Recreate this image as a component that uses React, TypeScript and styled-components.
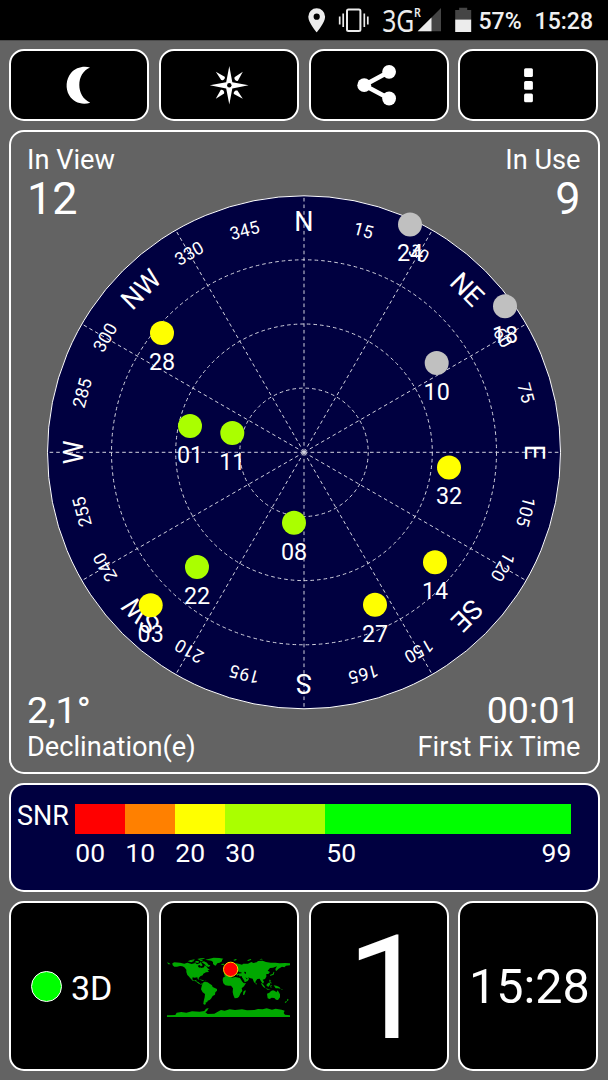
import React from "react";
import styled, { createGlobalStyle } from "styled-components";

const GlobalStyle = createGlobalStyle`
  * { box-sizing: border-box; }
  body { margin: 0; background: #636363; font-family: Roboto, "Liberation Sans", sans-serif; color: #fff; }
`;

const Screen = styled.div`
  width: 608px;
  height: 1080px;
  overflow: hidden;
  display: flex;
  flex-direction: column;
  background: #636363;
`;

const StatusBar = styled.header`
  height: 41px;
  flex: none;
  display: flex;
  align-items: flex-start;
  padding-left: 302px;
  background: #000;
  border-bottom: 1px solid #4c4c4c;
`;

const StatusIcons = styled.svg`
  display: block;
  width: 174px;
  height: 40px;
`;

const StatusText = styled.span<{ $left: number }>`
  margin-left: ${(p) => p.$left}px;
  font-size: 23px;
  font-weight: 500;
  line-height: 43px;
  color: #f0f0f0;
`;

const Main = styled.main`
  display: flex;
  flex-direction: column;
  gap: 9px;
  padding: 8px 8.5px 8px 9px;
`;

const Row = styled.div<{ $height: number }>`
  display: grid;
  grid-template-columns: repeat(4, 140px);
  grid-template-rows: 100%;
  gap: 9.8px;
  height: ${(p) => p.$height}px;
`;

const Tile = styled.div`
  display: flex;
  align-items: center;
  justify-content: center;
  min-width: 0;
  min-height: 0;
  background: #000;
  border: 2px solid #fff;
  border-radius: 15px;
`;

const TileIcon = styled.svg`
  display: block;
  width: 60px;
  height: 60px;
`;

const SkyPanel = styled.section`
  display: grid;
  grid-template: 1fr 1fr / 1fr 1fr;
  height: 644px;
  border: 2px solid #fff;
  border-radius: 15px;
`;

const Dial = styled.svg`
  grid-area: 1 / 1 / 3 / 3;
  width: 586px;
  height: 640px;
`;

const Readout = styled.div<{ $row: number; $col: number }>`
  grid-area: ${(p) => p.$row} / ${(p) => p.$col};
  align-self: ${(p) => (p.$row === 1 ? "start" : "end")};
  padding: 13px 17px 10px 16px;
  text-align: ${(p) => (p.$col === 1 ? "left" : "right")};
`;

const Label = styled.div`
  font-size: 27.2px;
  line-height: 30px;
`;

const Value = styled.div<{ $size: number; $line: number }>`
  font-size: ${(p) => p.$size}px;
  line-height: ${(p) => p.$line}px;
`;

const SnrPanel = styled.section`
  display: flex;
  height: 109px;
  padding: 19px 25px 0 6px;
  background: #000040;
  border: 2px solid #fff;
  border-radius: 15px;
`;

const SnrTitle = styled.div`
  width: 58.3px;
  font-size: 27px;
  line-height: 24px;
`;

const Scale = styled.div`
  display: grid;
  grid-template-columns: 50px 50px 50px 100px 246px;
  grid-template-rows: 30px 38px;
`;

const Band = styled.div<{ $color: string }>`
  background: ${(p) => p.$color};
`;

const Tick = styled.div`
  display: flex;
  justify-content: space-between;
  font-size: 26.5px;
  line-height: 38px;
`;

const LastTick = styled(Tick)`
  padding-left: 1px;
`;

const FixTile = styled(Tile)`
  justify-content: flex-start;
  padding-left: 20px;
  gap: 9px;
  font-size: 34px;
`;

const FixLamp = styled.span`
  width: 31px;
  height: 31px;
  border: 1.5px solid #fff;
  border-radius: 50%;
  background: #00ff00;
`;

const FixText = styled.span`
  line-height: 38px;
  padding-top: 3px;
`;

const MapSvg = styled.svg`
  display: block;
  flex: none;
  width: 136px;
  height: 90px;
  margin-bottom: 2px;
`;

const BigDigit = styled.span`
  font-size: 145px;
  line-height: 150px;
  padding: 4px 0 0 18px;
`;

const Clock = styled.span`
  font-size: 48.5px;
  line-height: 56px;
  padding: 2px 0 0 2px;
`;

const CX = 304;
const CY = 452.3;
const R = 256.5;

const names: Record<number, string> = {
  0: "N", 45: "NE", 90: "E", 135: "SE", 180: "S", 225: "SW", 270: "W", 315: "NW",
};

const lime = "#aaff00";
const yellow = "#ffff00";
const silver = "#c0c0c0";

const satellites = [
  { id: "24", x: 410, y: 224.5, color: silver },
  { id: "18", x: 505, y: 306.3, color: silver },
  { id: "10", x: 436.7, y: 363, color: silver },
  { id: "28", x: 162, y: 333, color: yellow },
  { id: "01", x: 190, y: 426, color: lime },
  { id: "11", x: 232.3, y: 433, color: lime },
  { id: "32", x: 449, y: 467.5, color: yellow },
  { id: "08", x: 294, y: 522.7, color: lime },
  { id: "14", x: 435, y: 562.3, color: yellow },
  { id: "22", x: 197, y: 567, color: lime },
  { id: "27", x: 375, y: 604.7, color: yellow },
  { id: "03", x: 150.7, y: 605.3, color: yellow },
];

const bands = ["#ff0000", "#ff8000", "#ffff00", "#aaff00", "#00ff00"];

function SkyDial() {
  const spokes = Array.from({ length: 12 }, (_, i) => (i * Math.PI) / 6);
  const bearings = Array.from({ length: 24 }, (_, i) => i * 15);
  return (
    <Dial viewBox="11 132 586 640" fontFamily="Roboto, sans-serif" fill="#fff" textAnchor="middle">
      <circle cx={CX} cy={CY} r={R} fill="#000040" stroke="#fff" strokeWidth={1} />
      <g fill="none" stroke="#d2d2de" strokeWidth={1} strokeDasharray="3.6 3">
        {[64.2, 128.3, 192.5].map((r) => (
          <circle key={r} cx={CX} cy={CY} r={r} />
        ))}
        {spokes.map((a) => (
          <line key={a} x1={CX} y1={CY} x2={CX + R * Math.sin(a)} y2={CY - R * Math.cos(a)} />
        ))}
      </g>
      {bearings.map((b) => (
        <text
          key={b}
          x={CX}
          y={names[b] ? CY - 221.2 : CY - 223.5}
          fontSize={names[b] ? 27 : 17.8}
          transform={`rotate(${b} ${CX} ${CY})`}
        >
          {names[b] ?? b}
        </text>
      ))}
      {satellites.map((s) => (
        <g key={s.id}>
          <circle cx={s.x} cy={s.y} r={12} fill={s.color} />
          <text x={s.x} y={s.y + 36.8} fontSize={23.3}>{s.id}</text>
        </g>
      ))}
    </Dial>
  );
}

function WorldMap() {
  return (
    <MapSvg viewBox="18 0 408 270">
      <g fill="#00a800">
        <path d="M52 70L58 67 75 68 88 71 97 68 110 72 121 69 126 73 134 70 137 66 143 76 137 80 139 84 147 82 149 76 155 80 158 85 164 89 158 91 162 96 153 97 145 101 143 106 136 109 131 114 132 119 128 117 127 112 119 113 113 112 112 118 117 122 124 119 124 124 131 127 136 132 143 130 139 134 131 131 122 124 113 122 106 115 101 109 97 105 94 96 94 89 88 82 82 79 75 78 66 80 58 80 53 76z" />
        <path d="M36 67l6 2 5 4-7 0zM98 64l9-4 10 3-8 4zM108 60l11-2-2 4zM118 67l6-4 8 1-2 5zM127 57l10-2 14-1-8 4-10 2zM139 66l8-2 9 4 4 6 6 2-4 5-8-2-5-6zM133 61l8-1 3 3-8 1z" />
        <path d="M151 59L164 56 176 53 193 54 205 56 201 60 201 64 194 68 187 70 182 77 177 75 174 71 174 66 169 62 159 61z" />
        <path d="M132 118l11 2 5 3-4 0-6-2zM150 122l6 1-5 1z" />
        <path d="M143 129L148 125 158 127 164 131 171 136 173 141 186 147 186 152 181 157 180 164 173 168 168 176 164 180 158 182 157 186 151 188 153 192 149 194 145 192 146 184 149 172 150 162 143 157 138 148 140 139z" />
        <path d="M197 73l7-2 5 1-4 4zM235 60l7-3 4 2-7 3zM276 61l11-4 2 2-9 4zM313 59l6-3 5 2z" />
        <path d="M209 108L207 99 214 96 211 88 220 83 234 76 243 70 253 72 261 74 265 71 279 71 289 66 295 69 305 67 309 63 323 62 333 66 347 68 361 68 374 70 390 69 405 70 405 76 393 77 388 82 381 80 371 86 363 94 361 87 366 79 354 83 345 84 338 92 345 96 340 102 334 102 334 110 330 117 323 119 327 125 324 131 318 124 314 116 307 117 302 124 301 130 297 127 293 116 284 114 280 111 282 117 278 123 269 127 261 115 261 109 253 109 252 104 246 107 243 101 239 107 233 101 227 105 220 103 216 109z" />
        <path d="M204 113L212 108 226 109 231 113 241 111 255 114 262 125 267 130 273 129 267 139 260 145 262 153 257 159 252 170 247 174 239 175 235 165 233 156 234 145 228 137 220 137 211 136 205 130 203 121z" />
        <path d="M265 155l6-5 1 4-4 10-4 1zM302 128l3 2-1 4-2-2zM318 128l6 5 6 8 1 4-6-4-5-7zM335 133l8-6 3 5-5 8-6-2zM347 135l5 0-4 3 2 5-4-1zM356 136l8 1 9 4 4 6-7-2-8 0-4-6zM343 119l4 1-1 5 4 4-2 2-5-7zM331 145l9 2 8 1-10 1z" />
        <path d="M345 108l1-4 7-2 3-7 2 1-2 8zM336 161L343 158 348 153 354 151 360 153 364 157 368 151 375 163 375 172 369 180 363 179 358 174 350 173 344 177 338 175z" />
        <path d="M397 176l4 3-3 4-2-1zM392 184l4-1-3 5-4 0zM379 147l5 3-4 0z" />
        <path d="M36 226L61 225 65 218 79 216 94 218 111 214 134 215 148 213 153 206 161 204 156 213 151 217 158 222 178 221 187 216 198 210 209 212 224 208 240 210 261 208 276 211 298 210 309 207 323 208 335 205 351 209 362 206 380 209 389 212 386 219 390 224 405 226 405 231 36 231z" />
      </g>
      <g fill="#000">
        <path d="M245 97l5-3 4 3 5 0 1 3-13 1zM268 95l5 1-1 7-4-4zM258 112l3 0 8 12-2 1zM271 112l7 4-3 2zM128 77l6-2 4 4-2 5-5-2z" />
      </g>
      <circle cx="227" cy="88" r="21.5" fill="#ff0000" stroke="#ffd000" strokeWidth="3" />
    </MapSvg>
  );
}

function SystemIcons() {
  return (
    <StatusIcons viewBox="302 0 174 40">
      <path
        fill="#ececec"
        fillRule="evenodd"
        d="M316.700 8.300a8.400 8.400 0 0 0-8.400 8.400c0 6.100 8.400 15.600 8.400 15.600s8.400-9.500 8.400-15.600a8.400 8.400 0 0 0-8.400-8.400zm0 5.300a3.100 3.100 0 1 1 0 6.200 3.100 3.100 0 0 1 0-6.200z"
      />
      <rect x="347" y="9.500" width="13.400" height="21.500" rx="1.500" fill="none" stroke="#ececec" strokeWidth="2" />
      <path d="M343.200 13.500v13.500M339.700 16.500v8M364.300 13.500v13.500M367.800 16.500v8" stroke="#ececec" strokeWidth="1.700" />
      <g fill="#ececec" fontFamily="'Noto Sans', sans-serif">
        <text transform="translate(382.200 32) scale(.81 1)" fontSize="30.500">3G</text>
        <text transform="translate(414 17.300) scale(.9 1)" fontSize="11.800" fontWeight="600">R</text>
      </g>
      <path d="M441 8v23.300h-23.300z" fill="#454545" />
      <path d="M431.500 17.500v13.800h-13.800z" fill="#ececec" />
      <path d="M455.200 10h4V7.700h8V10h4v9.500h-16z" fill="#454545" />
      <path d="M455.200 19.500h16v12.500h-16z" fill="#ececec" />
    </StatusIcons>
  );
}

export default function App() {
  return (
    <>
      <GlobalStyle />
      <Screen>
        <StatusBar>
          <SystemIcons />
          <StatusText $left={2.5}>57%</StatusText>
          <StatusText $left={13}>15:28</StatusText>
        </StatusBar>
        <Main>
          <Row $height={72}>
            <Tile>
              <TileIcon viewBox="49 55 60 60">
                <path fill="#fff" d="M90 67.400C83 65.600 75.500 67.600 71 73C65.800 79.200 65.300 88.500 69.200 95.300C73.300 102.300 82 105.500 90.300 102.700C83 99.400 79.300 92.500 79.300 85C79.300 77 83.300 70.200 90 67.400z" />
              </TileIcon>
            </Tile>
            <Tile>
              <TileIcon viewBox="198.700 55 60 60">
                <path fill="#fff" d="M229 66L232 82.300 248.300 85.300 232 88.400 229 104.600 225.900 88.400 209.500 85.300 225.900 82.300z" />
                <g fill="#fff">
                  {[0, 90, 180, 270].map((a) => (
                    <path key={a} transform={`rotate(${a} 229 85.300)`} d="M242.500 71.800L237.600 80.700C236 81.500 233.500 79.500 234.200 77.200z" />
                  ))}
                </g>
                <circle cx="229" cy="85.300" r="2.200" fill="#000" />
              </TileIcon>
            </Tile>
            <Tile>
              <TileIcon viewBox="348.600 55 60 60">
                <path d="M388.700 71.800L363.800 85.200 388.700 98.500" fill="none" stroke="#fff" strokeWidth="4.600" />
                <circle cx="388.700" cy="71.800" r="6.900" fill="#fff" />
                <circle cx="363.800" cy="85.200" r="6.900" fill="#fff" />
                <circle cx="388.700" cy="98.500" r="6.900" fill="#fff" />
              </TileIcon>
            </Tile>
            <Tile>
              <TileIcon viewBox="498.200 55 60 60" fill="#fff">
                <rect x="524.300" y="68.300" width="8.800" height="8.800" rx="1.500" />
                <rect x="524.300" y="81" width="8.800" height="8.800" rx="1.500" />
                <rect x="524.300" y="93.500" width="8.800" height="8.800" rx="1.500" />
              </TileIcon>
            </Tile>
          </Row>

          <SkyPanel>
            <SkyDial />
            <Readout $row={1} $col={1}>
              <Label>In View</Label>
              <Value $size={45} $line={48}>12</Value>
            </Readout>
            <Readout $row={1} $col={2}>
              <Label>In Use</Label>
              <Value $size={45} $line={48}>9</Value>
            </Readout>
            <Readout $row={2} $col={1}>
              <Value $size={37.7} $line={44}>2,1°</Value>
              <Label>Declination(e)</Label>
            </Readout>
            <Readout $row={2} $col={2}>
              <Value $size={37.7} $line={44}>00:01</Value>
              <Label>First Fix Time</Label>
            </Readout>
          </SkyPanel>

          <SnrPanel>
            <SnrTitle>SNR</SnrTitle>
            <Scale>
              {bands.map((c) => (
                <Band key={c} $color={c} />
              ))}
              <Tick>00</Tick>
              <Tick>10</Tick>
              <Tick>20</Tick>
              <Tick>30</Tick>
              <LastTick>
                <span>50</span>
                <span>99</span>
              </LastTick>
            </Scale>
          </SnrPanel>

          <Row $height={170}>
            <FixTile>
              <FixLamp />
              <FixText>3D</FixText>
            </FixTile>
            <Tile>
              <WorldMap />
            </Tile>
            <Tile>
              <BigDigit>1</BigDigit>
            </Tile>
            <Tile>
              <Clock>15:28</Clock>
            </Tile>
          </Row>
        </Main>
      </Screen>
    </>
  );
}
